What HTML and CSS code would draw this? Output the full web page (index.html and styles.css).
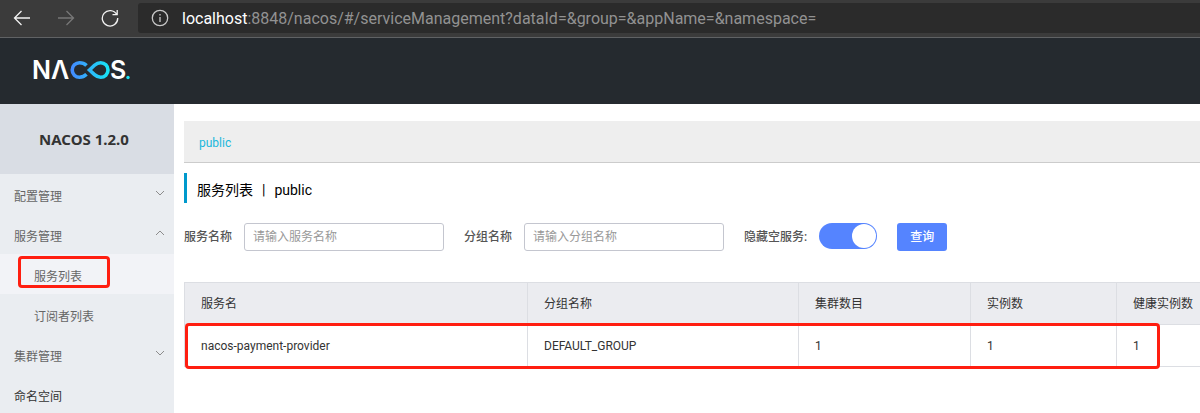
FILE: index.html
```html
<!DOCTYPE html>
<html lang="zh-CN">
<head>
<meta charset="utf-8">
<title>Nacos</title>
<link rel="stylesheet" href="styles.css">
</head>
<body>
<div class="browser-bar">
  <button class="nav-button" type="button" aria-label="Back">
    <svg width="18" height="16" viewBox="0 0 18 16"><path d="M17 8H1.500M8.500 1 1.500 8l7 7"/></svg>
  </button>
  <button class="nav-button nav-disabled" type="button" aria-label="Forward" disabled>
    <svg width="18" height="16" viewBox="0 0 18 16"><path d="M1 8h15.500M9.500 1l7 7-7 7"/></svg>
  </button>
  <button class="nav-button" type="button" aria-label="Reload">
    <svg width="18" height="18" viewBox="0 0 18 18"><path d="M15.700 5.500A7.700 7.700 0 1 0 16.700 9M16.200 1v4.700H11.500"/></svg>
  </button>
  <div class="address">
    <svg class="info-icon" width="18" height="18" viewBox="0 0 18 18"><circle cx="9" cy="9" r="7.700"/><path d="M9 8v5M9 5v1.500"/></svg>
    <span class="url"><span class="url-host">localhost</span>:8848/nacos/#/serviceManagement?dataId=&amp;group=&amp;appName=&amp;namespace=</span>
  </div>
</div>
<header class="header">
  <svg class="logo" width="98" height="24" viewBox="0 0 98 24" role="img" aria-label="NACOS">
    <defs>
      <linearGradient id="loop" gradientUnits="userSpaceOnUse" x1="37" y1="0" x2="75" y2="0">
        <stop offset="0" stop-color="#4489ff"/>
        <stop offset="1" stop-color="#16e5f5"/>
      </linearGradient>
    </defs>
    <text class="logo-text" x="-2" y="21">N</text>
    <text class="logo-text" x="17" y="21">Λ</text>
    <path class="logo-loop" d="M52.500 7.500C50.500 5.500 48.500 4.700 45.500 4.700a7.300 7.300 0 0 0 0 14.600c3 0 5-1 7-3M55.500 12l5-4.700c2-1.800 4-2.600 6.200-2.600a7.300 7.300 0 0 1 0 14.600c-2.200 0-4.200-.8-6.200-2.600z"/>
    <text class="logo-text" x="76" y="21">S</text>
    <circle class="logo-dot" cx="94" cy="19.500" r="1.700"/>
  </svg>
</header>
<div class="layout">
  <nav class="sidebar">
    <h1 class="product">NACOS 1.2.0</h1>
    <ul class="menu">
      <li><button class="menu-item" type="button">配置管理<svg class="chevron" width="10" height="6" viewBox="0 0 10 6"><path d="M1 1l4 4 4-4"/></svg></button></li>
      <li><button class="menu-item" type="button" aria-expanded="true">服务管理<svg class="chevron" width="10" height="6" viewBox="0 0 10 6"><path d="M1 5l4-4 4 4"/></svg></button>
        <ul class="menu">
          <li class="current"><a class="menu-item sub-item" href="#services">服务列表</a><span class="mark mark-menu"></span></li>
          <li><a class="menu-item sub-item" href="#subscribers">订阅者列表</a></li>
        </ul>
      </li>
      <li><button class="menu-item" type="button">集群管理<svg class="chevron" width="10" height="6" viewBox="0 0 10 6"><path d="M1 1l4 4 4-4"/></svg></button></li>
      <li><a class="menu-item menu-link" href="#namespaces">命名空间</a></li>
    </ul>
  </nav>
  <main class="content">
    <div class="namespaces"><a class="namespace" href="#public">public</a></div>
    <h2 class="title"><span>服务列表</span><span>|</span><span>public</span></h2>
    <form class="filters">
      <label class="label" for="service">服务名称</label>
      <input class="field" id="service" type="text" placeholder="请输入服务名称">
      <label class="label" for="group">分组名称</label>
      <input class="field" id="group" type="text" placeholder="请输入分组名称">
      <label class="label" for="hide">隐藏空服务:</label>
      <input class="switch" id="hide" type="checkbox" role="switch" checked>
      <button class="submit" type="button">查询</button>
    </form>
    <div class="table-area">
      <table class="table">
        <colgroup><col class="col-name"><col class="col-group"><col class="col-clusters"><col class="col-count"><col class="col-healthy"></colgroup>
        <thead><tr><th>服务名</th><th>分组名称</th><th>集群数目</th><th>实例数</th><th>健康实例数</th></tr></thead>
        <tbody><tr><td>nacos-payment-provider</td><td>DEFAULT_GROUP</td><td>1</td><td>1</td><td>1</td></tr></tbody>
      </table>
      <span class="mark mark-row"></span>
    </div>
  </main>
</div>
</body>
</html>
```
FILE: styles.css
```css
* { box-sizing: border-box; }

body {
  margin: 0;
  min-height: 100vh;
  display: flex;
  flex-direction: column;
  overflow: hidden;
  background: #fff;
  color: #333;
  font: 12px/20px "Noto Sans CJK SC", sans-serif;
}

button, input { font: inherit; }
a { text-decoration: none; }

.browser-bar {
  display: flex;
  align-items: center;
  height: 38px;
  padding: 0 0 2px 13px;
  gap: 26px;
  background: #3b3b3b;
  border-bottom: 1px solid #606264;
}

.nav-button {
  display: flex;
  padding: 0;
  border: 0;
  background: none;
  color: #f2f2f2;
}
.nav-disabled { color: #777; }
.nav-button svg, .info-icon {
  fill: none;
  stroke: currentColor;
  stroke-width: 1.3;
}

.address {
  flex: 1;
  display: flex;
  align-items: center;
  gap: 13px;
  height: 30px;
  margin-left: -7px;
  padding-left: 13px;
  border-radius: 3px 0 0 3px;
  background: #2b2b2b;
  color: #c8c8c8;
}
.url {
  padding-top: 2px;
  color: #929292;
  font-family: Roboto, sans-serif;
  font-size: 16px;
  white-space: nowrap;
}
.url-host { color: #fff; }

.header {
  display: flex;
  align-items: center;
  height: 66px;
  padding: 0 34px 2px;
  background: #252a2f;
}
.logo { overflow: visible; }
.logo-text {
  fill: #fff;
  font: 600 25px Inter, sans-serif;
}
.logo-loop {
  fill: none;
  stroke: url(#loop);
  stroke-width: 3.6;
}
.logo-dot { fill: #16e5f5; }

.layout {
  flex: 1;
  display: flex;
}

.sidebar {
  flex: 0 0 174px;
  background: #eaedf1;
}
.product {
  margin: 0;
  background: #d9dde4;
  font-family: "Noto Sans", sans-serif;
  font-size: 15px;
  font-weight: 700;
  line-height: 70px;
  padding-right: 6px;
  text-align: center;
}
.menu {
  margin: 0;
  padding: 0;
  list-style: none;
}
.menu-item {
  display: flex;
  justify-content: space-between;
  align-items: center;
  width: 100%;
  height: 40px;
  padding: 4px 9px 0 14px;
  border: 0;
  background: none;
  color: #666;
}
.sub-item { padding-left: 34px; }
.menu-link { color: #333; }
.chevron {
  margin-bottom: 6px;
  fill: none;
  stroke: #8c8c8c;
}
.current {
  position: relative;
  background: #f2f3f7;
}

.mark {
  position: absolute;
  border: 3px solid #ff1e10;
  border-radius: 4px;
  pointer-events: none;
}
.mark-menu { inset: 2px 64px 6px 18px; }
.mark-row { inset: 41px 40px -2px 1px; }

.content {
  flex: 1;
  min-width: 0;
  padding: 17px 0 0 10px;
  font-family: Roboto, "Noto Sans CJK SC", sans-serif;
}
.namespaces {
  padding: 12px 15px 9px;
  background: #eee;
  border-bottom: 1px solid #ccc;
}
.namespace { color: #1ab8dc; }

.title {
  display: flex;
  gap: 9px;
  margin: 10px 0 20px;
  padding: 4px 0 0 10px;
  border-left: 3px solid #09c;
  color: #000;
  font-size: 14px;
  font-weight: 400;
  line-height: 26px;
}

.filters {
  display: flex;
  align-items: center;
  height: 28px;
}
.label {
  margin-right: 12px;
  color: #555;
  font-weight: 500;
}
.field {
  width: 200px;
  height: 28px;
  margin-right: 20px;
  padding: 0 8px;
  border: 1px solid #c4c6cf;
  border-radius: 3px;
}
.field::placeholder { color: #999; }
.switch {
  appearance: none;
  display: flex;
  justify-content: flex-end;
  width: 58px;
  height: 26px;
  margin: 0 20px 2px 0;
  padding: 1px;
  border-radius: 13px;
  background: #5584ff;
}
.switch::before {
  content: "";
  width: 24px;
  border-radius: 50%;
  background: #fff;
}
.submit {
  width: 50px;
  height: 28px;
  padding: 0;
  border: 0;
  border-radius: 3px;
  background: #5584ff;
  color: #fff;
  font-weight: 500;
}

.table-area {
  position: relative;
  margin-top: 31px;
}
.table {
  width: 100%;
  border-collapse: collapse;
  table-layout: fixed;
}
.table th, .table td {
  height: 42px;
  padding: 0 16px;
  border: 1px solid #dcdee3;
  border-right: 0;
  text-align: left;
  font-weight: 400;
  white-space: nowrap;
}
.table th { background: #ebecf0; }
.col-name { width: 343px; }
.col-group { width: 271px; }
.col-clusters { width: 172px; }
.col-count { width: 146px; }
```
